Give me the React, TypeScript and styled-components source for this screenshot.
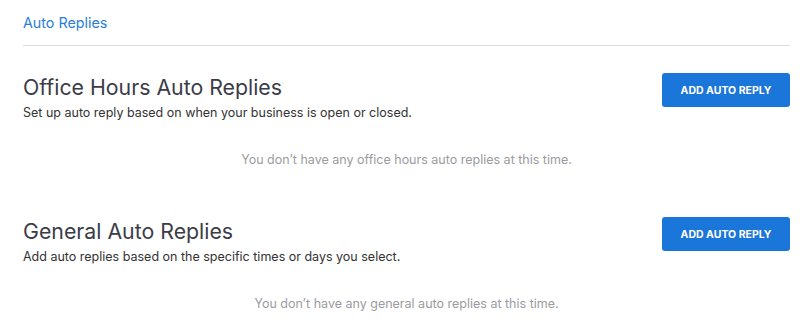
import React from 'react'
import styled, {createGlobalStyle} from 'styled-components'

const GlobalStyle = createGlobalStyle`
    body {
        margin: 0;
        background: #fff;
        font-family: Inter, "Noto Sans", sans-serif;
    }
`

const Page = styled.div`
    padding: 0 19px 0 23px;
`
const TabBar = styled.div`
    display: flex;
    border-bottom: 1px solid #dcdcdc;
    height: 45px;
    align-items: flex-start;
`
const Tab = styled.div`
    color: #2b7ddb;
    font-size: 14.3px;
    padding-top: 14px;
    line-height: 17px;
`
const Section = styled.section`
    padding-top: 27px;
    height: 144px;
    box-sizing: border-box;
`
const SectionHeader = styled.div`
    display: flex;
    justify-content: space-between;
    align-items: flex-start;
`
const Titles = styled.div`
    display: flex;
    flex-direction: column;
`
const Title = styled.h2`
    margin: 0;
    margin-top: 1px;
    font-size: 21.3px;
    font-weight: 400;
    line-height: 27px;
    color: #3b3c48;
`
const Subtitle = styled.p`
    margin: 4px 0 0;
    font-size: 12.5px;
    line-height: 16px;
    color: #333;
`
const AddButton = styled.button`
    width: 128px;
    height: 34px;
    border: none;
    border-radius: 3px;
    background: #1a76d8;
    color: #fff;
    font-family: inherit;
    font-size: 10.5px;
    font-weight: 700;
    text-transform: uppercase;
    cursor: pointer;
`
const EmptyText = styled.p`
    margin: 31px 0 0;
    text-align: center;
    font-size: 12.5px;
    line-height: 16px;
    color: #9b9ba0;
`

const sections = [
    {
        title: 'Office Hours Auto Replies',
        subtitle: 'Set up auto reply based on when your business is open or closed.',
        empty: 'You don’t have any office hours auto replies at this time.',
    },
    {
        title: 'General Auto Replies',
        subtitle: 'Add auto replies based on the specific times or days you select.',
        empty: 'You don’t have any general auto replies at this time.',
    },
]

export default function App(): JSX.Element {
    return (
        <>
            <GlobalStyle />
            <Page>
                <TabBar>
                    <Tab>Auto Replies</Tab>
                </TabBar>
                {sections.map(s => (
                    <Section key={s.title}>
                        <SectionHeader>
                            <Titles>
                                <Title>{s.title}</Title>
                                <Subtitle>{s.subtitle}</Subtitle>
                            </Titles>
                            <AddButton>Add auto reply</AddButton>
                        </SectionHeader>
                        <EmptyText>{s.empty}</EmptyText>
                    </Section>
                ))}
            </Page>
        </>
    )
}
